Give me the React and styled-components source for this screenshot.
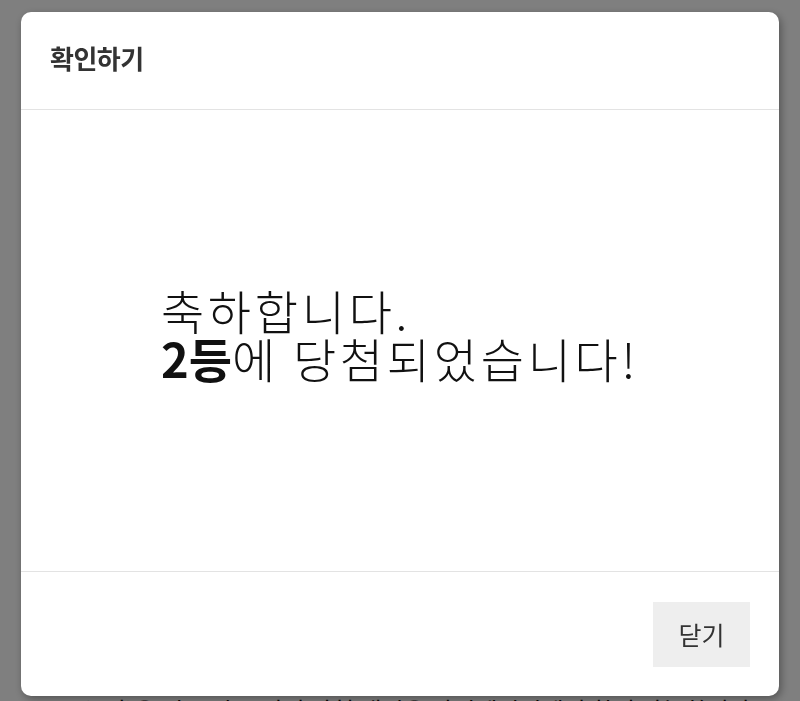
import React from "react";
import styled, { createGlobalStyle } from "styled-components";

const Global = createGlobalStyle`
  html, body { margin: 0; padding: 0; background: #fff; }
  body { font-family: "Noto Sans CJK KR", "Noto Sans", sans-serif; overflow: hidden; }
`;

const Page = styled.div`
  width: 800px;
  height: 701px;
  padding: 694px 0 0 28px;
  box-sizing: border-box;
  overflow: hidden;
`;

const PageLine = styled.p`
  margin: 0;
  font-size: 24px;
  line-height: 32px;
  color: #111;
  white-space: nowrap;
  font-family: "Noto Sans CJK KR", sans-serif;
`;

const Overlay = styled.div`
  position: fixed;
  inset: 0;
  background: rgba(0, 0, 0, 0.5);
  padding: 12px 21px 5px;
  box-sizing: border-box;
`;

const Dialog = styled.div`
  width: 758px;
  height: 684px;
  background: #fff;
  border-radius: 10px;
  box-shadow: 2px 3px 8px rgba(0, 0, 0, 0.35);
  display: flex;
  flex-direction: column;
  overflow: hidden;
`;

const Header = styled.div`
  height: 98px;
  padding: 0 29px 6px;
  box-sizing: border-box;
  display: flex;
  align-items: center;
  border-bottom: 1px solid #e3e3e3;
  flex-shrink: 0;
`;

const Title = styled.h2`
  margin: 0;
  font-size: 26px;
  font-weight: 700;
  color: #333;
  letter-spacing: -0.5px;
`;

const Body = styled.div`
  flex: 1;
  display: flex;
  align-items: center;
  justify-content: center;
  padding-bottom: 14px;
  box-sizing: border-box;
`;

const Message = styled.p`
  margin: 0;
  font-size: 47px;
  line-height: 48px;
  font-weight: 300;
  letter-spacing: 3.7px;
  color: #111;
  text-align: left;
`;

const Strong = styled.b`
  font-weight: 700;
  letter-spacing: 0;
`;

const Footer = styled.div`
  height: 124px;
  padding: 0 29px;
  border-top: 1px solid #e3e3e3;
  display: flex;
  align-items: center;
  justify-content: flex-end;
  flex-shrink: 0;
`;

const CloseButton = styled.button`
  width: 97px;
  height: 65px;
  border: none;
  background: #eeeeee;
  color: #333;
  font-size: 25px;
  font-family: "Noto Sans CJK KR", sans-serif;
  cursor: pointer;
  padding: 0;
`;

export default function App() {
  return (
    <>
      <Global />
      <Page>
        <PageLine>· 1등(1명)은 지급 완료 되며 당첨 내역은 마이페이지에서 확인 가능합니다.</PageLine>
      </Page>
      <Overlay>
        <Dialog>
          <Header>
            <Title>확인하기</Title>
          </Header>
          <Body>
            <Message>
              축하합니다.
              <br />
              <Strong>2등</Strong>에 당첨되었습니다!
            </Message>
          </Body>
          <Footer>
            <CloseButton>닫기</CloseButton>
          </Footer>
        </Dialog>
      </Overlay>
    </>
  );
}
